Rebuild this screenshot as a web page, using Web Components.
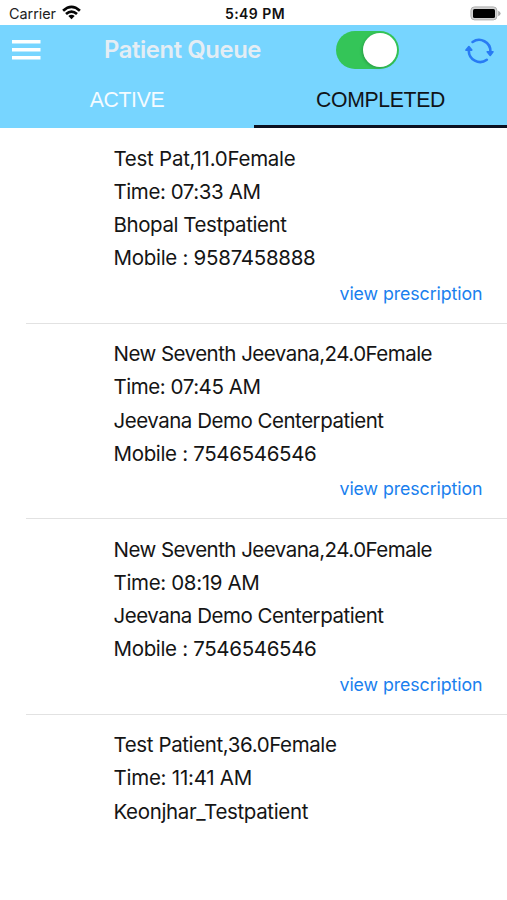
<!DOCTYPE html>
<html lang="en">
<head>
<meta charset="utf-8">
<title>Patient Queue</title>
<style>
html,body{margin:0;background:#fff}
body{width:507px;height:900px;overflow:hidden;font-family:Inter,"Liberation Sans",sans-serif;color:#151515}
</style>
</head>
<body>
<queue-app></queue-app>
<script>
class BaseElement extends HTMLElement {
  render(html) {
    if (!this.shadowRoot) this.attachShadow({mode:'open'}).innerHTML = html;
  }
}

// One line of text, tracked so that it spans the number of pixels in "span".
customElements.define('text-line', class extends BaseElement {
  connectedCallback() {
    this.render(`<style>:host{display:block;white-space:pre}span{display:inline-block}</style><span></span>`);
    const s = this.shadowRoot.querySelector('span');
    s.textContent = this.getAttribute('text');
    const target = parseFloat(this.getAttribute('span'));
    const gap = (target - s.getBoundingClientRect().width) / s.textContent.length;
    s.style.letterSpacing = gap.toFixed(3) + 'px';
  }
});

customElements.define('status-bar', class extends BaseElement {
  connectedCallback() {
    this.render(`<style>
      :host{display:grid;grid-template-columns:1fr auto 1fr;align-items:center;height:25.3px;box-sizing:border-box;padding:2px 6px 0 9px;font-size:14.4px;line-height:20px;color:#222}
      .left{display:flex;align-items:center;gap:6px}
      .wifi{margin-top:-2px}
      .time{font-weight:600;font-size:14px;color:#111}
      .battery{justify-self:end;margin-top:-1px}
      svg{display:block}
    </style>
    <div class="left"><text-line text="Carrier" span="47"></text-line>
      <svg class="wifi" width="19" height="15" viewBox="0 0 19 15" fill="none" stroke="#050505" stroke-width="2.7">
        <path d="M1.1 5.8Q9.5-1.9 17.9 5.8"/><path d="M4 9Q9.5 4.1 15 9"/><path d="M9.5 14.3 6.3 11.1Q9.5 8.5 12.7 11.1Z" fill="#050505" stroke="none"/>
      </svg></div>
    <text-line class="time" text="5:49 PM" span="60"></text-line>
    <svg class="battery" width="31" height="15" viewBox="0 0 31 15">
      <rect x=".9" y=".9" width="26" height="13" rx="3.6" fill="#d2d2d2" stroke="#b0b0b0"/>
      <rect x="3" y="3" width="22" height="9" rx="1.5" fill="#000"/>
      <path d="M28.2 4.8Q30.6 6 30.6 7.5T28.2 10.2Z" fill="#a6a6a6"/>
    </svg>`);
  }
});

customElements.define('toggle-switch', class extends BaseElement {
  connectedCallback() {
    this.render(`<style>
      :host{display:flex;justify-content:flex-end;box-sizing:border-box;width:63px;height:38px;padding:2px;border-radius:19px;background:#34c558}
      i{width:34px;height:34px;border-radius:50%;background:#fff;box-shadow:-1px 1px 3px #0003}
    </style><i></i>`);
  }
});

customElements.define('nav-bar', class extends BaseElement {
  connectedCallback() {
    this.render(`<style>
      :host{display:grid;grid-template-columns:92px 231.5px 1fr auto;align-items:center;height:50px;padding:0 13px 0 12px;background:#77d5ff}
      svg{display:block}
      .title{font-size:23.8px;font-weight:600;line-height:30px;color:#e4edf4}
      .refresh{margin-top:1px}
    </style>
    <svg width="29" height="20" viewBox="0 0 29 20" fill="#fff"><path d="M0 0h28.5v3.6H0zM0 8h28.5v3.6H0zM0 16h28.5v3.6H0z"/></svg>
    <text-line class="title" text="Patient Queue" span="157"></text-line>
    <toggle-switch></toggle-switch>
    <svg class="refresh" width="29" height="28" viewBox="0 0 29 28" fill="none" stroke="#287bf4" stroke-width="2.6" stroke-linecap="round">
      <path d="M7.6 5A11.3 11.3 0 0 1 25.4 14.4"/><path d="M21.8 22.8A11.3 11.3 0 0 1 3.8 13.4"/>
      <path d="M22.2 14.8h5.8L25.2 18.4ZM1 13.1h5.8L3.9 9.5Z" fill="#287bf4" stroke-width="1.6" stroke-linejoin="round"/>
    </svg>`);
  }
});

customElements.define('queue-tabs', class extends BaseElement {
  connectedCallback() {
    this.render(`<style>
      :host{display:grid;grid-template-columns:254px 253px;height:52.3px;background:#77d5ff;font-family:"Liberation Sans",Arial,sans-serif;font-size:21.2px;line-height:50px}
      div{display:flex;justify-content:center;box-sizing:border-box;height:100%}
      .off{color:#f4fbff}
      .on{color:#101418;border-bottom:3px solid #0b1020}
    </style>
    <div class="off"><text-line text="ACTIVE" span="74.5"></text-line></div>
    <div class="on"><text-line text="COMPLETED" span="129"></text-line></div>`);
  }
});

customElements.define('patient-row', class extends BaseElement {
  connectedCallback() {
    const lines = JSON.parse(this.getAttribute('lines'));
    this.render(`<style>
      :host{display:block;box-sizing:border-box;height:195.5px;margin-left:26px;padding:13.5px 24.5px 0 87.5px;font-size:20.5px;line-height:33.2px}
      :host([link]){border-bottom:1px solid #e2e2e2}
      .link{display:flex;justify-content:flex-end;font-size:17.8px;line-height:37px;color:#1a80ee}
    </style>
    ${lines.map(([t,w]) => `<text-line text="${t}" span="${w}"></text-line>`).join('')}
    ${this.hasAttribute('link') ? '<div class="link"><text-line text="view prescription" span="143"></text-line></div>' : ''}`);
  }
});

customElements.define('queue-app', class extends BaseElement {
  connectedCallback() {
    this.render(`<style>:host{display:block;width:507px;height:900px;overflow:hidden;background:#fff}queue-tabs{margin-bottom:.6px}</style>
    <status-bar></status-bar><nav-bar></nav-bar><queue-tabs></queue-tabs>
    <patient-row link lines='[["Test Pat,11.0Female",182],["Time: 07:33 AM",147],["Bhopal Testpatient",173],["Mobile : 9587458888",202]]'></patient-row>
    <patient-row link lines='[["New Seventh Jeevana,24.0Female",318.5],["Time: 07:45 AM",147],["Jeevana Demo Centerpatient",270],["Mobile : 7546546546",203]]'></patient-row>
    <patient-row link lines='[["New Seventh Jeevana,24.0Female",318.5],["Time: 08:19 AM",146],["Jeevana Demo Centerpatient",270],["Mobile : 7546546546",203]]'></patient-row>
    <patient-row lines='[["Test Patient,36.0Female",223],["Time: 11:41 AM",138.5],["Keonjhar_Testpatient",194.5]]'></patient-row>`);
  }
});
</script>
</body>
</html>
